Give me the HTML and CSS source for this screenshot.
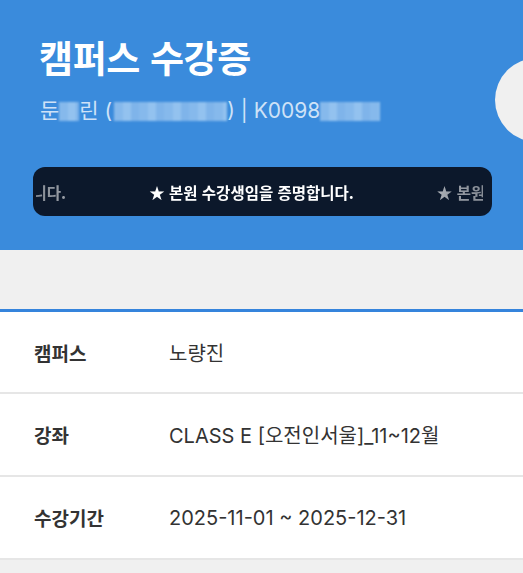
FILE: index.html
```html
<!DOCTYPE html>
<html lang="ko">
<head>
<meta charset="utf-8">
<title>캠퍼스 수강증</title>
<link rel="stylesheet" href="styles.css">
</head>
<body>
<div class="page">
  <header class="hero">
    <h1 class="title">캠퍼스 수강증</h1>
    <p class="sub">둔<span class="blur b-name"></span>린 (<span class="blur b-id"></span>) | K0098<span class="blur b-no"></span></p>
    <div class="marquee">
      <div class="viewport">
        <div class="track">
          <span class="item">★ 본원 수강생임을 증명합니다.</span>
          <span class="item">★ 본원 수강생임을 증명합니다.</span>
          <span class="item">★ 본원 수강생임을 증명합니다.</span>
        </div>
      </div>
    </div>
    <span class="notch"></span>
  </header>
  <div class="spacer"></div>
  <section class="info">
    <div class="row"><span class="label">캠퍼스</span><span class="value">노량진</span></div>
    <div class="row"><span class="label">강좌</span><span class="value">CLASS E [오전인서울]_11~12월</span></div>
    <div class="row"><span class="label">수강기간</span><span class="value">2025-11-01 ~ 2025-12-31</span></div>
  </section>
</div>
</body>
</html>
```
FILE: styles.css
```css
* { box-sizing: border-box; }
html, body { margin: 0; padding: 0; }
body {
  background: #f0f0f0;
  font-family: "Inter", "Noto Sans CJK KR", sans-serif;
  color: #333;
}
.page { width: 523px; overflow: hidden; }
.hero {
  position: relative;
  background: #3a8bdc;
  height: 250px;
  padding: 34px 31px 0 33px;
  display: flex;
  flex-direction: column;
}
.title {
  margin: 0 0 0 6px;
  font-family: "Noto Sans CJK KR", sans-serif;
  font-size: 37px;
  line-height: 46px;
  font-weight: 700;
  color: #fff;
  letter-spacing: -0.4px;
}
.sub {
  margin: 16px 0 0 7px;
  font-size: 21px;
  line-height: 30px;
  color: #cfe2f7;
  display: flex;
  align-items: center;
  white-space: pre;
}
.blur {
  display: inline-block;
  height: 19px;
  background: repeating-linear-gradient(90deg, #86b9ec 0 9px, #93c2ef 9px 17px, #7fb4ea 17px 25px);
  filter: blur(0.8px);
}
.b-name { width: 20px; }
.b-id { width: 113px; margin-left: 2px; }
.b-no { width: 60px; }
.marquee {
  margin-top: 41px;
  height: 49px;
  background: #0c182b;
  border-radius: 12px;
  padding: 0 9px 0 3px;
  display: flex;
  align-items: center;
}
.viewport {
  flex: 1;
  overflow: hidden;
  display: flex;
  justify-content: center;
  -webkit-mask-image: linear-gradient(90deg, rgba(0,0,0,0.5) 0, rgba(0,0,0,0.6) 8%, #000 20%, #000 80%, rgba(0,0,0,0.6) 92%, rgba(0,0,0,0.5) 100%);
  mask-image: linear-gradient(90deg, rgba(0,0,0,0.5) 0, rgba(0,0,0,0.6) 8%, #000 20%, #000 80%, rgba(0,0,0,0.6) 92%, rgba(0,0,0,0.5) 100%);
}
.track {
  display: flex;
  gap: 83px;
  flex: none;
  transform: translateX(-8px);
}
.item {
  flex: none;
  font-family: "Noto Sans CJK KR", sans-serif;
  font-size: 15.5px;
  font-weight: 700;
  color: #fff;
  white-space: nowrap;
}
.notch {
  position: absolute;
  width: 84px;
  height: 84px;
  border-radius: 50%;
  background: #f0f0f0;
  left: 495px;
  top: 58px;
}
.spacer { height: 59px; }
.info {
  background: #fff;
  border-top: 3px solid #3584dc;
}
.row {
  height: 83px;
  display: flex;
  align-items: center;
  padding-left: 34px;
  border-bottom: 2px solid #e6e6e6;
  font-size: 20px;
}
.row:first-child { height: 82px; }
.label {
  width: 135px;
  font-family: "Noto Sans CJK KR", sans-serif;
  font-size: 19px;
  font-weight: 700;
  color: #333;
}
.value { color: #333; }
```
